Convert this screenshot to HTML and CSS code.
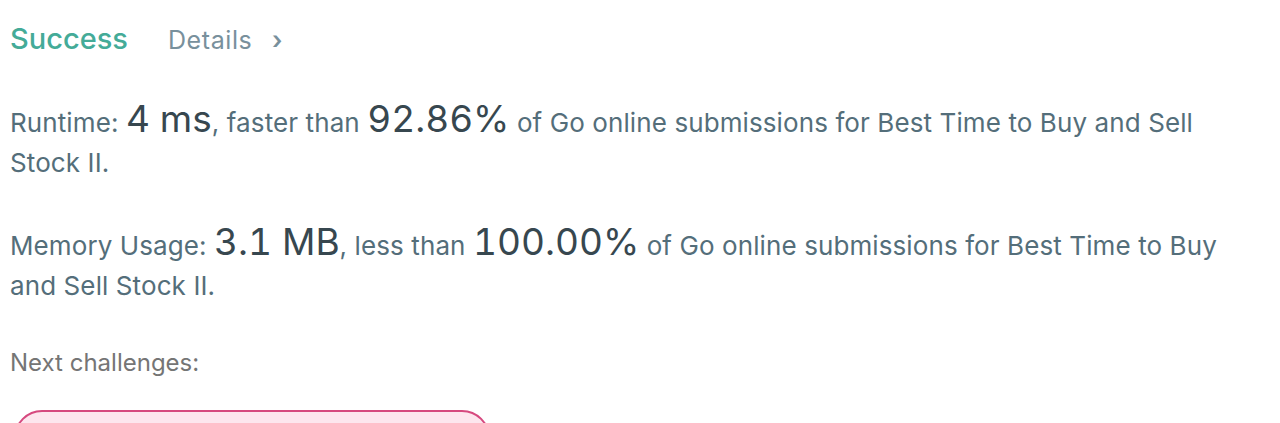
FILE: index.html
```html
<!DOCTYPE html>
<html lang="en">
<head>
    <meta charset="UTF-8">
    <title>Submission Result</title>
    <link rel="stylesheet" href="styles.css">
</head>
<body>
<div class="result">
    <div class="result-head">
        <span class="status">Success</span>
        <a class="details" href="#">Details <span class="chevron">&rsaquo;</span></a>
    </div>
    <p class="stat">
        Runtime: <span class="big">4 ms</span>, faster than <span class="big">92.86%</span> of Go online submissions for Best Time to Buy and Sell Stock II.
    </p>
    <p class="stat">
        Memory Usage: <span class="big">3.1 MB</span>, less than <span class="big">100.00%</span> of Go online submissions for Best Time to Buy and Sell Stock II.
    </p>
    <p class="next-title">Next challenges:</p>
    <div class="challenges">
        <a class="challenge hard" href="#">Best Time to Buy and Sell Stock IV</a>
    </div>
</div>
</body>
</html>
```

FILE: styles.css
```css
body {
    margin: 0;
    font-family: Inter, "Liberation Sans", Arial, sans-serif;
    background-color: #fff;
    color: #546e7a;
}
.result {
    padding: 21px 10px 0 10px;
}
.result-head {
    display: flex;
    align-items: baseline;
    gap: 40px;
    height: 44px;
}
.status {
    font-size: 29px;
    font-weight: 500;
    color: #44ab98;
}
.details {
    font-size: 25px;
    letter-spacing: 0.6px;
    color: #78909c;
    text-decoration: none;
}
.chevron {
    margin-left: 12px;
    font-weight: 600;
}
.stat {
    font-size: 26px;
    letter-spacing: 0.1px;
    line-height: 40px;
    margin: 35px 0 40px 0;
    max-width: 1225px;
}
.stat .big {
    font-size: 37px;
    letter-spacing: 0;
    font-feature-settings: "tnum";
    line-height: 1;
    color: #37474f;
}
.next-title {
    font-size: 24px;
    line-height: 40px;
    margin: -3px 0 0 0;
    color: #757575;
}
.challenges {
    margin-top: 27px;
    padding-left: 4px;
}
.challenge {
    display: inline-block;
    width: 440px;
    padding: 12px 16px;
    border: 2px solid #d6497f;
    border-radius: 28px;
    background-color: #fde6ee;
    color: #d6497f;
    font-size: 24px;
    text-decoration: none;
}
```
